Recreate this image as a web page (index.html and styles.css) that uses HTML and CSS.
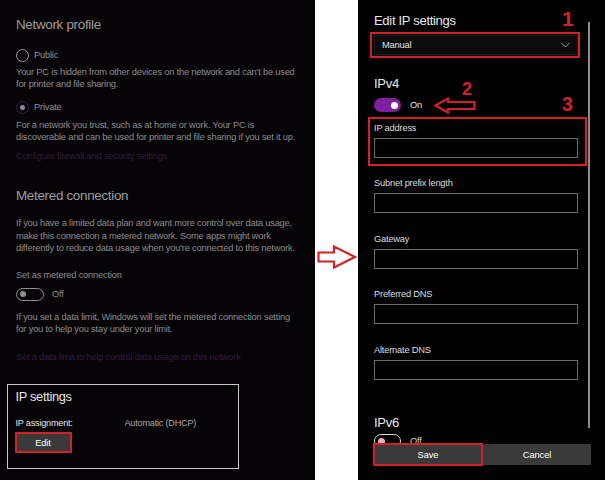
FILE: index.html
```html
<!DOCTYPE html>
<html lang="en">
<head>
<meta charset="utf-8">
<title>Network settings</title>
<link rel="stylesheet" href="styles.css">
</head>
<body>
<div class="page">
  <section class="net">
    <h2 class="sec-title">Network profile</h2>
    <div class="radio radio-first"><span class="ring"></span>Public</div>
    <p class="desc desc-a">Your PC is hidden from other devices on the network and can't be used<br>for printer and file sharing.</p>
    <div class="radio radio-second"><span class="ring ring-on"></span>Private</div>
    <p class="desc desc-b">For a network you trust, such as at home or work. Your PC is<br>discoverable and can be used for printer and file sharing if you set it up.</p>
    <a class="link link-a">Configure firewall and security settings</a>

    <h2 class="sec-title sec-metered">Metered connection</h2>
    <p class="desc desc-c">If you have a limited data plan and want more control over data usage,<br>make this connection a metered network. Some apps might work<br>differently to reduce data usage when you're connected to this network.</p>
    <p class="desc desc-d">Set as metered connection</p>
    <div class="switch-row switch-off-row"><span class="switch switch-off"><span class="knob"></span></span>Off</div>
    <p class="desc desc-e">If you set a data limit, Windows will set the metered connection setting<br>for you to help you stay under your limit.</p>
    <a class="link link-b">Set a data limit to help control data usage on this network</a>

    <div class="ip-box">
      <h3 class="ip-title">IP settings</h3>
      <div class="ip-row"><span class="ip-key">IP assignment:</span><span class="ip-val">Automatic (DHCP)</span></div>
      <button class="btn btn-edit">Edit</button>
    </div>
  </section>

  <div class="gutter">
    <svg class="arrow-right" width="40" height="24" viewBox="0 0 40 24">
      <polygon points="1.5,7.5 17,7.5 17,1.5 38,12 17,22.5 17,16.5 1.5,16.5" fill="none" stroke="#d42128" stroke-width="2.2" stroke-linejoin="miter"/>
    </svg>
  </div>

  <section class="edit">
    <h2 class="edit-title">Edit IP settings</h2>
    <div class="mark mark-select">
      <div class="select">
        <span>Manual</span>
        <svg class="chev" width="9" height="6" viewBox="0 0 9 6"><polyline points="0.5,1 4.5,5 8.5,1" fill="none" stroke="#a8a8a8" stroke-width="1"/></svg>
      </div>
    </div>

    <h2 class="edit-title ipv4">IPv4</h2>
    <div class="switch-row switch-on-row"><span class="switch switch-on"><span class="knob"></span></span>On</div>

    <div class="mark mark-field">
      <label class="field-label">IP address</label>
      <div class="input"></div>
    </div>
    <div class="field field-second">
      <label class="field-label">Subnet prefix length</label>
      <div class="input"></div>
    </div>
    <div class="field">
      <label class="field-label">Gateway</label>
      <div class="input"></div>
    </div>
    <div class="field">
      <label class="field-label">Preferred DNS</label>
      <div class="input"></div>
    </div>
    <div class="field">
      <label class="field-label">Alternate DNS</label>
      <div class="input"></div>
    </div>

    <h2 class="edit-title ipv6">IPv6</h2>
    <div class="switch-row switch-v6-row"><span class="switch switch-v6"><span class="knob"></span></span>Off</div>

    <div class="scroll-thumb"></div>

    <div class="footer">
      <button class="btn btn-save">Save</button>
      <button class="btn btn-cancel">Cancel</button>
    </div>

    <span class="num num-1">1</span>
    <span class="num num-2">2</span>
    <span class="num num-3">3</span>
    <svg class="arrow-left" width="42" height="17" viewBox="0 0 42 17">
      <polygon points="1.5,8.5 14,1.5 14,5 40.5,5 40.5,12 14,12 14,15.5" fill="none" stroke="#d42128" stroke-width="2.2"/>
    </svg>
  </section>
</div>
</body>
</html>
```

FILE: styles.css
```css
* {
  box-sizing: border-box;
  margin: 0;
  padding: 0;
}

body {
  width: 605px;
  height: 480px;
  overflow: hidden;
  background: #ffffff;
  font-family: "Liberation Sans", Arial, sans-serif;
}

.page {
  display: flex;
  height: 480px;
}

/* ---------- left: network profile page (dimmed) ---------- */
.net {
  width: 315px;
  flex: none;
  background: #070408;
  color: #8a8a8a;
  padding: 16px 0 0 16px;
  display: flex;
  flex-direction: column;
  align-items: flex-start;
}

.sec-title {
  font-size: 13.4px;
  letter-spacing: -0.3px;
  font-weight: normal;
  line-height: 18px;
  color: #9e9e9e;
}

.sec-metered {
  margin-top: 25px;
}

.radio {
  display: flex;
  align-items: center;
  gap: 5px;
  height: 16px;
  font-size: 9.3px;
  letter-spacing: -0.2px;
  color: #929292;
}

.radio-first { margin-top: 13px; }
.radio-second { margin-top: 9px; }

.ring {
  width: 13px;
  height: 13px;
  border-radius: 50%;
  border: 1.5px solid #9a9a9a;
  display: flex;
  align-items: center;
  justify-content: center;
}

.ring-on {
  border-color: #3a1d44;
}

.ring-on::after {
  content: "";
  width: 5px;
  height: 5px;
  border-radius: 50%;
  background: #8d8d8d;
}

.desc {
  font-size: 9.3px;
  letter-spacing: -0.2px;
  line-height: 12px;
  color: #8c8c8c;
}

.desc-a { margin-top: 3px; }
.desc-b { margin-top: 4px; }
.desc-c { margin-top: 12px; line-height: 12.5px; }
.desc-d { margin-top: 14.5px; }
.desc-e { margin-top: 10.5px; }

.link {
  font-size: 9.3px;
  letter-spacing: -0.2px;
  line-height: 12px;
  color: #361940;
}

.link-a { margin-top: 7px; }
.link-b { margin-top: 16px; }

.switch-row {
  display: flex;
  align-items: center;
  font-size: 9.3px;
  letter-spacing: -0.2px;
}

.switch-off-row {
  margin-top: 6.5px;
  height: 13px;
  gap: 8px;
  color: #8a8a8a;
}

.switch {
  display: flex;
  align-items: center;
  border-radius: 8px;
}

.switch-off {
  width: 28px;
  height: 13px;
  border: 1.5px solid #8e8e8e;
  padding-left: 3px;
}

.switch-off .knob {
  width: 6px;
  height: 6px;
  border-radius: 50%;
  background: #8e8e8e;
}

.ip-box {
  margin: 21px 0 0 -9px;
  width: 232px;
  height: 85px;
  border: 1.5px solid #c8c8c8;
  padding: 4px 0 0 7.5px;
  color: #e6e6e6;
}

.ip-title {
  font-size: 12.8px;
  letter-spacing: -0.3px;
  font-weight: normal;
  line-height: 16px;
}

.ip-row {
  display: flex;
  margin-top: 12px;
  font-size: 9.1px;
  letter-spacing: -0.2px;
  line-height: 12px;
}

.ip-key {
  width: 109px;
}

.ip-val {
  color: #a9a9a9;
}

.btn {
  font-family: inherit;
  font-size: 9.3px;
  letter-spacing: -0.1px;
  color: #ffffff;
  background: #3a3a3a;
  border: none;
  display: flex;
  align-items: center;
  justify-content: center;
}

.btn-edit {
  margin: 3px 0 0 -1px;
  width: 57px;
  height: 21px;
  border: 2px solid #d42128;
}

/* ---------- middle gutter ---------- */
.gutter {
  width: 43px;
  flex: none;
  background: #ffffff;
  padding: 245px 0 0 2px;
}

.arrow-right {
  display: block;
}

/* ---------- right: edit IP settings dialog ---------- */
.edit {
  width: 247px;
  flex: none;
  position: relative;
  background: #000000;
  color: #e2e2e2;
  padding: 12px 0 0 16px;
  display: flex;
  flex-direction: column;
  align-items: flex-start;
}

.edit-title {
  font-size: 13px;
  letter-spacing: -0.3px;
  font-weight: normal;
  line-height: 18px;
  color: #e8e8e8;
}

.mark {
  border: 2px solid #d42128;
}

.mark-select {
  margin: 2px 0 0 -4px;
  width: 210px;
  padding: 1px 0 1px 2px;
}

.select {
  width: 204px;
  height: 20px;
  background: #0c0c0c;
  border: 1px solid #1e1e1e;
  display: flex;
  align-items: center;
  justify-content: space-between;
  padding: 0 7px 0 7px;
  font-size: 9.3px;
  letter-spacing: -0.2px;
  color: #e4e4e4;
}

.chev {
  display: block;
}

.ipv4 { margin-top: 17px; }

.switch-on-row {
  margin-top: 5px;
  height: 14px;
  gap: 9px;
  color: #e2e2e2;
}

.switch-on {
  width: 27px;
  height: 14px;
  background: #7f1fa2;
  justify-content: flex-end;
  padding-right: 3.5px;
}

.switch-on .knob {
  width: 7px;
  height: 7px;
  border-radius: 50%;
  background: #ffffff;
}

.mark-field {
  margin: 5px 0 0 -6px;
  width: 219px;
  padding: 3px 7px 6px 4px;
}

.field {
  margin-top: 19.5px;
}

.field-second {
  margin-top: 11px;
}

.field-label {
  display: block;
  font-size: 9.3px;
  letter-spacing: -0.2px;
  line-height: 12px;
  color: #dedede;
}

.input {
  margin-top: 4px;
  width: 204px;
  height: 20px;
  border: 1.5px solid #6a6a6a;
  background: #000000;
}

.ipv6 { margin-top: 34.5px; }

.switch-v6-row {
  margin-top: 2px;
  height: 14px;
  gap: 9px;
  color: #cfcfcf;
}

.switch-v6 {
  width: 27px;
  height: 14px;
  border: 1.5px solid #d8d8d8;
  padding-left: 3px;
}

.switch-v6 .knob {
  width: 7px;
  height: 7px;
  border-radius: 50%;
  background: #e4b3c0;
}

/* scrollbar thumb drawn over the panel edge */
.scroll-thumb {
  position: absolute;
  left: 230px;
  top: 22px;
  width: 1.5px;
  height: 406px;
  background: #8c8c8c;
}

/* button bar pinned over the bottom of the dialog */
.footer {
  position: absolute;
  left: 15px;
  top: 443px;
  width: 218px;
  height: 23px;
  display: flex;
  align-items: center;
  background: #000000;
}

.btn-save {
  width: 110px;
  height: 23px;
  border: 2px solid #d42128;
}

.btn-cancel {
  flex: 1;
  height: 21px;
}

/* step numbers and pointer */
.num {
  position: absolute;
  font-weight: bold;
  color: #d42128;
  line-height: 1;
}

.num-1 { left: 204px; top: 8px; font-size: 21px; }
.num-2 { left: 104px; top: 80px; font-size: 18px; }
.num-3 { left: 204px; top: 95px; font-size: 19.5px; }

.arrow-left {
  position: absolute;
  left: 76px;
  top: 96.5px;
}
```
